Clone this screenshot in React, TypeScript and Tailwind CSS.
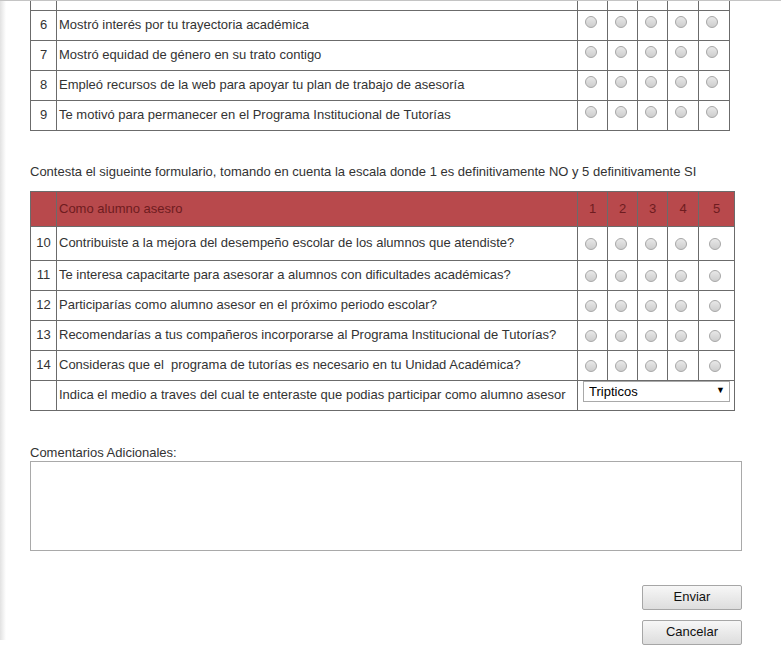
import React from 'react';

const Radio = () => (
  <input
    type="radio"
    className="appearance-none inline-block align-middle w-[12px] h-[12px] rounded-full border border-[#a8a8a8] bg-linear-to-b from-[#e8e8e8] to-[#cdcdcd] ml-[1px] mr-[5px]"
  />
);

const firstRows = [
  { n: 6, q: 'Mostró interés por tu trayectoria académica' },
  { n: 7, q: 'Mostró equidad de género en su trato contigo' },
  { n: 8, q: 'Empleó recursos de la web para apoyar tu plan de trabajo de asesoría' },
  { n: 9, q: 'Te motivó para permanecer en el Programa Institucional de Tutorías' },
];

const secondRows = [
  { n: 10, q: 'Contribuiste a la mejora del desempeño escolar de los alumnos que atendiste?', h: 'h-[34px]' },
  { n: 11, q: 'Te interesa capacitarte para asesorar a alumnos con dificultades académicas?', h: 'h-[30px]' },
  { n: 12, q: 'Participarías como alumno asesor en el próximo periodo escolar?', h: 'h-[30px]' },
  { n: 13, q: 'Recomendarías a tus compañeros incorporarse al Programa Institucional de Tutorías?', h: 'h-[30px]' },
  { n: 14, q: 'Consideras que el\u00a0 programa de tutorías es necesario en tu Unidad Académica?', h: 'h-[30px]' },
];

const cell = 'border border-[#6b6b6b] p-0';

export default function App() {
  return (
    <div className="w-[781px] h-[664px] bg-white border-t border-[#c4c4c4] flex text-[13px] text-[#333] font-['Liberation_Sans',Arial,sans-serif]">
      {/* page edge shadow */}
      <div className="w-[6px] h-[639px] bg-linear-to-r from-[#e2e2e2] to-white shrink-0" />

      <div className="pl-[24px] flex flex-col">
        {/* Table 1 (scrolled) */}
        <table className="border-collapse table-fixed w-[699px] border-t-0">
          <colgroup>
            <col className="w-[26px]" />
            <col className="w-[521px]" />
            <col className="w-[30px]" />
            <col className="w-[30px]" />
            <col className="w-[30px]" />
            <col className="w-[31px]" />
            <col className="w-[31px]" />
          </colgroup>
          <tbody>
            <tr className="h-[9px]">
              {Array.from({ length: 7 }).map((_, i) => (
                <td key={i} className="border-x border-b border-[#6b6b6b] p-0" />
              ))}
            </tr>
            {firstRows.map((r) => (
              <tr key={r.n} className="h-[30px]">
                <td className={`${cell} text-center`}>{r.n}</td>
                <td className={`${cell} pl-[2px]`}>{r.q}</td>
                {[1, 2, 3, 4, 5].map((v) => (
                  <td key={v} className={`${cell} align-top pt-[4px] text-center leading-none`}>
                    <Radio />
                  </td>
                ))}
              </tr>
            ))}
          </tbody>
        </table>

        <p className="mt-[33px] leading-[16px]">
          Contesta el sigueinte formulario, tomando en cuenta la escala donde 1 es definitivamente NO y 5 definitivamente SI
        </p>

        {/* Table 2 */}
        <table className="border-collapse table-fixed w-[704px] mt-[11px]">
          <colgroup>
            <col className="w-[26px]" />
            <col className="w-[521px]" />
            <col className="w-[30px]" />
            <col className="w-[30px]" />
            <col className="w-[30px]" />
            <col className="w-[31px]" />
            <col className="w-[36px]" />
          </colgroup>
          <tbody>
            <tr className="h-[35px] bg-[#b8494c] text-[#6e1c20]">
              <td className={cell} />
              <td className={`${cell} pl-[2px]`}>Como alumno asesro</td>
              {[1, 2, 3, 4, 5].map((v) => (
                <td key={v} className={`${cell} text-center`}>
                  {v}
                </td>
              ))}
            </tr>
            {secondRows.map((r) => (
              <tr key={r.n} className={r.h}>
                <td className={`${cell} text-center`}>{r.n}</td>
                <td className={`${cell} pl-[2px]`}>{r.q}</td>
                {[1, 2, 3, 4, 5].map((v) => (
                  <td key={v} className={`${cell} text-center leading-none`}>
                    <Radio />
                  </td>
                ))}
              </tr>
            ))}
            <tr className="h-[30px]">
              <td className={cell} />
              <td className={`${cell} pl-[2px]`}>
                Indica el medio a traves del cual te enteraste que podias participar como alumno asesor
              </td>
              <td colSpan={5} className={`${cell} align-top pl-[5px]`}>
                <div className="relative w-[147px] h-[21px]">
                  <select className="appearance-none w-full h-full border border-[#a9a9a9] bg-white pl-[5px] text-[13px] text-black outline-none">
                    <option>Tripticos</option>
                    <option>Carteles</option>
                    <option>Internet</option>
                  </select>
                  <span className="absolute right-[5px] top-[3px] text-[9px] text-black pointer-events-none">▼</span>
                </div>
              </td>
            </tr>
          </tbody>
        </table>

        <label className="mt-[34px] leading-[16px]">Comentarios Adicionales:</label>
        <textarea className="w-[712px] h-[90px] border border-[#a9a9a9] resize-none outline-none" />

        <div className="flex flex-col items-end gap-[10px] mt-[34px] w-[712px]">
          <button className="w-[100px] h-[25px] border border-[#a6a6a6] rounded-[2px] bg-linear-to-b from-[#f7f7f7] to-[#dddddd] text-[13px] text-[#111]">
            Enviar
          </button>
          <button className="w-[100px] h-[25px] border border-[#a6a6a6] rounded-[2px] bg-linear-to-b from-[#f7f7f7] to-[#dddddd] text-[13px] text-[#111]">
            Cancelar
          </button>
        </div>
      </div>
    </div>
  );
}
